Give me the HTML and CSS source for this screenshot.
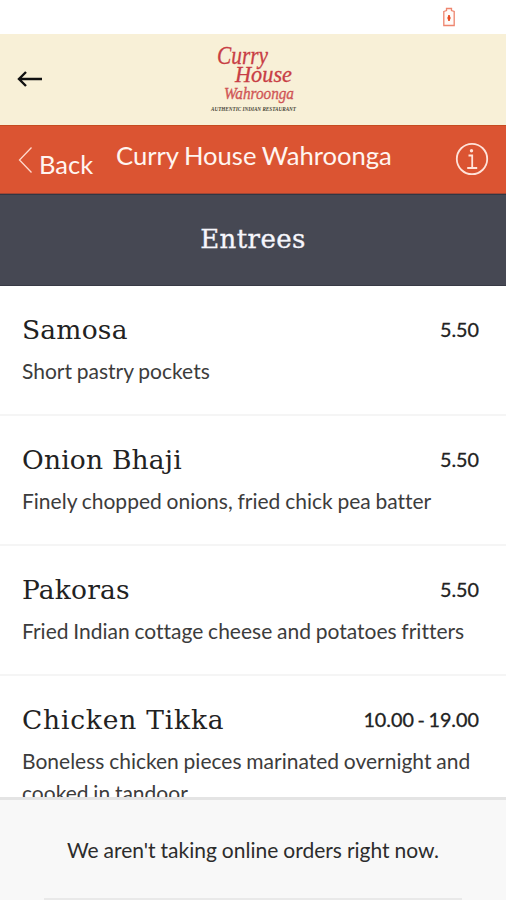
FILE: index.html
```html
<!DOCTYPE html>
<html lang="en">
   <head>
      <meta charset="UTF-8">
      <meta name="viewport" content="width=device-width, initial-scale=1.0">
      <title>Curry House Wahroonga</title>
      <link rel="stylesheet" href="styles.css">
   </head>
   <body>
      <div class="status-bar">
         <svg class="battery" width="14" height="20" viewBox="0 0 14 20">
            <path d="M1.8 4.5l2.7-1v-2h5v2l2.7 1v14H1.8z" fill="#fffaf8" stroke="#ee856e" stroke-width="1.3"/>
            <path d="M7 8l1.2 3L7 14 5.8 11z" fill="#e8481f" stroke="#e8481f"/>
         </svg>
      </div>
      <header class="app-bar">
         <svg class="arrow" width="28" height="20" viewBox="0 0 28 20">
            <path d="M26 10H4M10 3L3 10l7 7" fill="none" stroke="#111" stroke-width="2.4"/>
         </svg>
         <svg class="logo" width="90" height="72" viewBox="0 0 90 72">
            <g class="logo-name">
               <text x="8" y="20" font-size="25" textLength="51" lengthAdjust="spacingAndGlyphs">Curry</text>
               <text x="26" y="38" font-size="23" textLength="57" lengthAdjust="spacingAndGlyphs">House</text>
               <text class="logo-place" x="15" y="55" font-size="17" textLength="70" lengthAdjust="spacingAndGlyphs">Wahroonga</text>
            </g>
            <text class="logo-tag" x="2" y="67" textLength="85" lengthAdjust="spacingAndGlyphs">AUTHENTIC INDIAN RESTAURANT</text>
         </svg>
      </header>
      <nav class="title-bar">
         <a class="back">
            <svg width="16" height="28" viewBox="0 0 16 28">
               <path d="M13.5 1.5L1.5 14l12 12.5" fill="none" stroke="#ffd9cd" stroke-width="1.3"/>
            </svg>
            <span>Back</span>
         </a>
         <h1>Curry House Wahroonga</h1>
         <svg class="info" width="34" height="34" viewBox="0 0 34 34">
            <g fill="none" stroke="#ffe3da" stroke-width="1.8">
               <circle cx="17" cy="17" r="15.2"/>
               <path d="M13.5 13.5h3.7v12M12.2 26h10" />
            </g>
            <circle cx="16.5" cy="8.7" r="1.7" fill="#ffe3da"/>
         </svg>
      </nav>
      <h2 class="category">Entrees</h2>
      <main class="menu">
         <div class="item">
            <div class="item-head"><h3>Samosa</h3><span class="price">5.50</span></div>
            <p>Short pastry pockets</p>
         </div>
         <div class="item">
            <div class="item-head"><h3>Onion Bhaji</h3><span class="price">5.50</span></div>
            <p>Finely chopped onions, fried chick pea batter</p>
         </div>
         <div class="item">
            <div class="item-head"><h3>Pakoras</h3><span class="price">5.50</span></div>
            <p>Fried Indian cottage cheese and potatoes fritters</p>
         </div>
         <div class="item">
            <div class="item-head"><h3 class="wide">Chicken Tikka</h3><span class="price">10.00 - 19.00</span></div>
            <p>Boneless chicken pieces marinated overnight and cooked in tandoor</p>
         </div>
      </main>
      <footer class="notice">
         <p>We aren't taking online orders right now.</p>
         <div class="notice-line"></div>
      </footer>
   </body>
</html>
```
FILE: styles.css
```css
* {
box-sizing: border-box;
}
body {
margin: 0;
height: 900px;
display: flex;
flex-direction: column;
overflow: hidden;
background-color: #fff;
color: #222;
font-family: Lato, sans-serif;
font-variant-ligatures: none;
}
h1, h2, h3, p {
margin: 0;
font-weight: 400;
}
.status-bar {
flex: 0 0 34px;
display: flex;
justify-content: flex-end;
padding: 7px 50px 0 0;
}
.app-bar {
flex: 0 0 91px;
display: grid;
grid-template-columns: 1fr 90px 1fr;
align-items: center;
background-color: #f8f0d7;
padding: 0 16px;
}
.arrow {
margin-top: -2px;
}
.logo {
margin-left: 1px;
overflow: visible;
}
.logo-name {
font-family: "Liberation Serif", serif;
font-style: italic;
fill: #c83e45;
stroke: #c83e45;
stroke-width: 0.3px;
}
.logo-place {
fill: #d4605c;
}
.logo-tag {
font-family: "Liberation Serif", serif;
font-size: 6px;
font-style: italic;
font-weight: 700;
fill: #494638;
}
.title-bar {
flex: 0 0 69px;
display: flex;
align-items: flex-start;
background-color: #db5432;
border-top: 1px solid #c64b20;
border-bottom: 1px solid #a24634;
color: #fff5f0;
padding: 0 17px 0 18px;
}
.back {
display: flex;
width: 98px;
padding-top: 21px;
font-size: 25.5px;
line-height: 34px;
}
.back svg {
margin-top: -1px;
}
.back span {
margin-left: 5px;
}
.title-bar h1 {
flex: 1;
padding-top: 12px;
font-size: 25.6px;
line-height: 34px;
word-spacing: -1px;
white-space: nowrap;
}
.info {
margin-top: 16px;
}
.category {
flex: 0 0 92px;
background-color: #464853;
border-top: 1px solid #303744;
border-bottom: 1px solid #383a45;
color: #f6f6fc;
font-family: "DejaVu Serif", serif;
font-size: 26px;
letter-spacing: 0.4px;
line-height: 88px;
text-align: center;
-webkit-text-stroke: 0.3px #f6f6fc;
}
.menu {
flex: 0 0 511px;
overflow: hidden;
}
.item {
height: 130px;
border-bottom: 2px solid #f5f5f5;
padding: 26px 27px 0 22px;
}
.item-head {
display: flex;
justify-content: space-between;
}
.item h3 {
font-family: "DejaVu Serif", serif;
font-size: 26.5px;
letter-spacing: 0.2px;
line-height: 36px;
}
.item .wide {
letter-spacing: 0.8px;
}
.price {
font-size: 19.8px;
line-height: 34px;
word-spacing: -1.5px;
-webkit-text-stroke: 0.3px #222;
}
.item p {
margin-top: 7px;
font-size: 21px;
line-height: 32px;
word-spacing: -0.6px;
color: #3c3c3c;
}
.notice {
flex: 1;
display: flex;
flex-direction: column;
justify-content: space-between;
background-color: #f8f8f8;
border-top: 3px solid #e4e4e4;
text-align: center;
}
.notice p {
padding-top: 34px;
font-size: 21px;
line-height: 32px;
word-spacing: -0.4px;
color: #2c2c2c;
}
.notice-line {
height: 2px;
margin: 0 44px;
background-color: #e9e9e9;
}
```
